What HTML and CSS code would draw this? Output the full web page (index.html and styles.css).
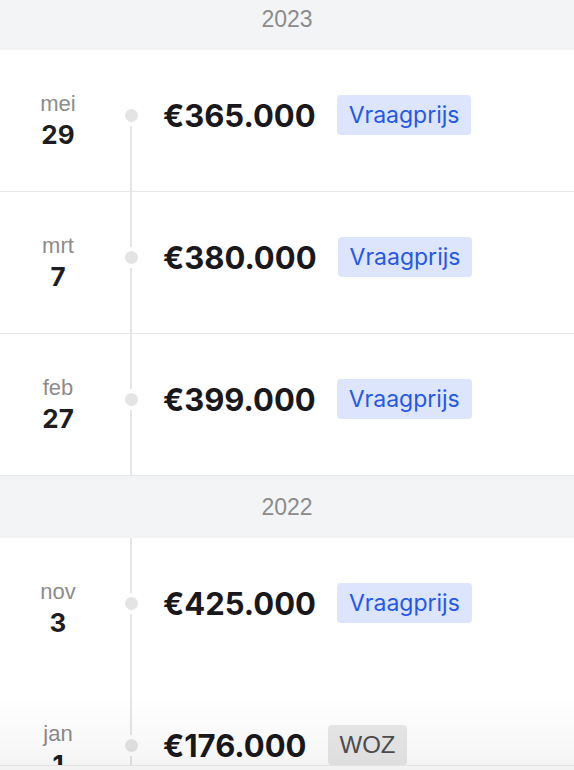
FILE: index.html
```html
<!DOCTYPE html>
<html lang="nl">
<head>
<meta charset="utf-8">
<title>Prijshistorie</title>
<link rel="stylesheet" href="styles.css">
</head>
<body>
<div class="history">
  <div class="year">2023</div>
  <div class="row">
    <div class="date"><div class="month">mei</div><div class="day">29</div></div>
    <div class="rail first"><span class="seg top"></span><span class="dot"></span><span class="seg bottom"></span></div>
    <div class="main"><span class="price">€365.000</span><span class="badge ask">Vraagprijs</span></div>
  </div>
  <div class="row">
    <div class="date"><div class="month">mrt</div><div class="day">7</div></div>
    <div class="rail"><span class="seg top"></span><span class="dot"></span><span class="seg bottom"></span></div>
    <div class="main"><span class="price">€380.000</span><span class="badge ask">Vraagprijs</span></div>
  </div>
  <div class="row">
    <div class="date"><div class="month">feb</div><div class="day">27</div></div>
    <div class="rail"><span class="seg top"></span><span class="dot"></span><span class="seg bottom"></span></div>
    <div class="main"><span class="price">€399.000</span><span class="badge ask">Vraagprijs</span></div>
  </div>
  <div class="year">2022</div>
  <div class="row noborder">
    <div class="date"><div class="month">nov</div><div class="day">3</div></div>
    <div class="rail"><span class="seg top"></span><span class="dot"></span><span class="seg bottom"></span></div>
    <div class="main"><span class="price">€425.000</span><span class="badge ask">Vraagprijs</span></div>
  </div>
  <div class="row">
    <div class="date"><div class="month">jan</div><div class="day">1</div></div>
    <div class="rail"><span class="seg top"></span><span class="dot"></span><span class="seg bottom"></span></div>
    <div class="main"><span class="price">€176.000</span><span class="badge woz">WOZ</span></div>
  </div>
</div>
<div class="fade"></div>
</body>
</html>
```
FILE: styles.css
```css
html, body {
  margin: 0;
  padding: 0;
  background: #ffffff;
  overflow: hidden;
}
body {
  width: 574px;
  height: 770px;
  font-family: Inter, "Liberation Sans", sans-serif;
}
.history {
  margin-top: -12px;
}
.year {
  height: 62px;
  background: #f3f4f6;
  display: flex;
  align-items: center;
  justify-content: center;
  font-family: "Liberation Sans", Arial, sans-serif;
  font-size: 23px;
  color: #8b8b8b;
}
.row {
  display: flex;
  height: 141px;
  border-bottom: 1px solid #e6e6e6;
}
.row.noborder {
  height: 142px;
  border-bottom: none;
}
.date {
  width: 116px;
  padding-top: 40px;
  text-align: center;
}
.month {
  font-family: "Liberation Sans", Arial, sans-serif;
  font-size: 22px;
  line-height: 27px;
  color: #8c8c8c;
}
.day {
  font-size: 26px;
  line-height: 36px;
  font-weight: 700;
  color: #1d1d22;
}
.rail {
  width: 30px;
  display: flex;
  flex-direction: column;
  align-items: center;
}
.seg {
  width: 2px;
  background: #e5e5e5;
}
.seg.top {
  height: 55px;
}
.rail.first .seg.top {
  background: transparent;
}
.seg.bottom {
  flex: 1;
}
.dot {
  width: 13px;
  height: 13px;
  border-radius: 50%;
  background: #e4e4e4;
  margin: 4px 0;
}
.main {
  height: 130px;
  display: flex;
  align-items: center;
  gap: 21px;
  margin-left: 17px;
}
.price {
  font-size: 31px;
  font-weight: 700;
  color: #18181d;
  letter-spacing: 0;
}
.badge {
  height: 40px;
  display: flex;
  align-items: center;
  padding: 0 12px;
  border-radius: 4px;
  font-size: 23px;
}
.badge.ask {
  background: #dce5fb;
  color: #2558e6;
}
.badge.woz {
  background: #e8e8e8;
  color: #4f4f4f;
  font-family: "Liberation Sans", Arial, sans-serif;
  font-size: 24px;
  padding: 0 12px;
}
.fade {
  position: fixed;
  left: 0;
  right: 0;
  bottom: 0;
  height: 68px;
  background: linear-gradient(to bottom, rgba(0,0,0,0) 0%, rgba(0,0,0,0.035) 90%, rgba(0,0,0,0.05) 100%);
  border-bottom: 4px solid #f2f2f2;
  box-shadow: inset 0 -1px 0 #e2e2e2;
  pointer-events: none;
}
```
